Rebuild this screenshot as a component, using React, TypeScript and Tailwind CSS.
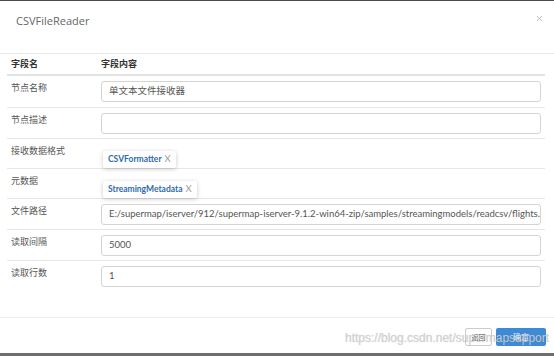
import React from "react";
import { X } from "lucide-react";

type Row = {
  label: string;
  kind: "input" | "tag";
  value: string;
};

const rows: Row[] = [
  { label: "节点名称", kind: "input", value: "单文本文件接收器" },
  { label: "节点描述", kind: "input", value: "" },
  { label: "接收数据格式", kind: "tag", value: "CSVFormatter" },
  { label: "元数据", kind: "tag", value: "StreamingMetadata" },
  {
    label: "文件路径",
    kind: "input",
    value:
      "E:/supermap/iserver/912/supermap-iserver-9.1.2-win64-zip/samples/streamingmodels/readcsv/flights.csv",
  },
  { label: "读取间隔", kind: "input", value: "5000" },
  { label: "读取行数", kind: "input", value: "1" },
];

const font = "font-['Lato','Noto_Sans_CJK_SC',sans-serif]";

function Tag({ text }: { text: string }) {
  return (
    <div className="ml-[2px] mt-[3px] inline-flex h-[17px] items-center rounded-[2px] bg-white pl-[5px] pr-[5px] shadow-[0_1px_4px_rgba(0,0,0,0.22)]">
      <span className="text-[8.5px] font-bold text-[#2f6cad]">{text}</span>
      <span className="ml-[3px] text-[9.5px] text-[#9a9a9a]">X</span>
    </div>
  );
}

export default function App() {
  return (
    <div
      className={`relative h-[356px] w-[554px] overflow-hidden border-t border-t-[#4a4a4a] border-b-[3px] border-b-[#6e6e6e] bg-white ${font}`}
    >
      {/* Header */}
      <div className="flex h-[53px] items-start justify-between border-b border-[#e8e8e8] pl-4 pr-[10px] pt-[12px]">
        <span className="font-['Open_Sans',sans-serif] text-[11px] leading-[16px] text-[#666]">
          CSVFileReader
        </span>
        <X className="mt-[1px] h-[9px] w-[9px] text-[#aaa]" strokeWidth={2} />
      </div>

      {/* Table */}
      <div className="h-[263px] px-[7px] pr-[9px]">
        <div className="flex h-[22px] items-center border-b-2 border-[#e3e3e3] text-[9px] font-bold text-[#333]">
          <div className="w-[94px] pl-[4px]">字段名</div>
          <div>字段内容</div>
        </div>
        {rows.map((row, i) => (
          <div
            key={row.label}
            className={`flex ${i > 0 ? "border-t border-[#e6e6e6]" : ""} ${
              row.kind === "tag" ? "h-[30px]" : "h-[31px]"
            } pt-[5px]`}
          >
            <div className="w-[94px] pl-[4px] text-[9px] leading-[14px] text-[#555]">
              {row.label}
            </div>
            <div className="min-w-0 flex-1 pr-[4px]">
              {row.kind === "tag" ? (
                <Tag text={row.value} />
              ) : (
                <div className="flex h-[21px] items-center overflow-hidden whitespace-nowrap rounded-[3px] border border-[#d4d4d4] pl-[7px] text-[9.5px] text-[#555]">
                  {row.value}
                </div>
              )}
            </div>
          </div>
        ))}
      </div>

      {/* Footer */}
      <div className="flex h-[36px] items-start justify-end gap-[4px] border-t border-[#ececec] pr-[8px] pt-[10px]">
        <button className="flex h-[18px] w-[27px] items-center justify-center rounded-[2px] border border-[#ccc] bg-white text-[7px] text-[#444]">
          返回
        </button>
        <button className="flex h-[18px] w-[50px] items-center justify-center rounded-[2px] bg-[#3d8ad6] text-[8px] text-white">
          确定
        </button>
      </div>

      {/* watermark */}
      <div className="pointer-events-none absolute left-[345px] top-[328px] font-['Liberation_Sans',sans-serif] text-[12px] text-[rgba(210,210,210,0.9)] [text-shadow:0_0_1px_rgba(120,120,120,0.35)]">
        https://blog.csdn.net/supermapsupport
      </div>
    </div>
  );
}
